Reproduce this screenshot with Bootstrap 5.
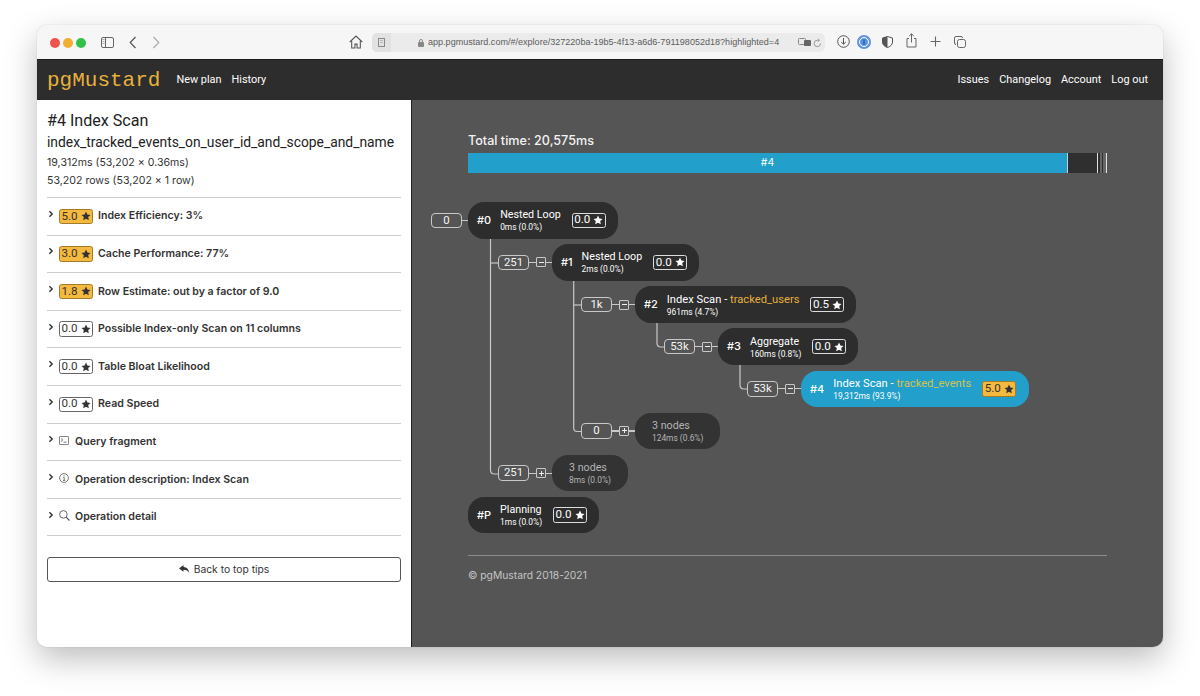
<!DOCTYPE html>
<html lang="en">
<head>
    <meta charset="UTF-8">
    <meta name="viewport" content="width=device-width, initial-scale=1.0">
    <title>pgMustard</title>
    <link href="https://cdn.jsdelivr.net/npm/bootstrap@5.3.3/dist/css/bootstrap.min.css" rel="stylesheet">
    <style>
        html, body { height: 100%; overflow: hidden; }
        body { background: #fff; font-family: Inter, "Liberation Sans", sans-serif; color: #2b2b2b; }

        /* browser window */
        .mac-window { margin: 25px 37px 0; width: 1126px; height: 622px; border-radius: 10px; overflow: hidden; box-shadow: 0 12px 32px rgba(0,0,0,.26), 0 0 1px rgba(0,0,0,.3); }
        .mac-toolbar { height: 35px; background: #f6f6f6; border-bottom: 1px solid #1c1c1c; color: #666; }
        .traffic { width: 10px; height: 10px; border-radius: 50%; margin-right: 3px; margin-top: 1px; }
        .traffic-red { background: #f0534e; margin-left: 12.5px; }
        .traffic-amber { background: #f2ae31; }
        .traffic-green { background: #33c148; }
        .url-box { position: absolute; left: 335px; top: 8px; width: 453px; height: 19px; background: #ebebeb; border-radius: 5px; font-family: "Liberation Sans", sans-serif; font-size: 9.05px; color: #5c5c5c; }
        .url-tab { position: absolute; left: 0; top: 0; width: 19px; height: 19px; background: #e2e2e2; border-radius: 5px 0 0 5px; }
        .url-text { position: absolute; left: 56px; top: 3px; white-space: nowrap; line-height: 13px; }
        .tb-icon { position: absolute; }
        .ic-sidebar { left: 64px; top: 12px; }
        .ic-back { left: 92px; top: 11px; }
        .ic-forward { left: 115px; top: 11px; }
        .ic-home { left: 312px; top: 10px; }
        .ic-reader { left: 5px; top: 5px; }
        .ic-lock { left: 46px; top: 6px; }
        .ic-translate { left: 426px; top: 5px; }
        .ic-reload { left: 441px; top: 5px; }
        .ic-download { left: 800px; top: 10px; }
        .ic-onepass { left: 820px; top: 10px; }
        .ic-shield { left: 845px; top: 11px; }
        .ic-share { left: 869px; top: 8px; }
        .ic-plus { left: 893px; top: 11px; }
        .ic-tabs { left: 917px; top: 11px; }

        /* app navbar */
        .app-nav { height: 40px; background: #2d2d2d; padding: 1px 10px 0; font-family: Roboto, sans-serif; }
        .app-brand { font-family: "Liberation Mono", monospace; font-size: 21px; color: #e8b03c; margin-right: 11px; padding: 0; line-height: 39px; }
        .app-link { color: #fff; font-size: 10.9px; padding: 0 5px; }
        .app-link:hover { color: #fff; }

        .main-row { height: 547px; }
        .side-panel { width: 375px; background: #fff; padding: 10px 10px 0; border-right: 1px solid #222; }
        .graph-panel { width: 751px; background: #555; padding: 0 56px; color: #fff; position: relative; }

        .plan-title { font-family: Roboto, sans-serif; font-size: 16.1px; line-height: 22px; font-weight: 400; margin: 0; color: #222; }
        .plan-index { font-family: Roboto, sans-serif; font-size: 13.85px; line-height: 20px; margin-bottom: 1.5px; color: #222; }
        .plan-meta { font-size: 10.6px; line-height: 18px; color: #333; }
        .tip-list { margin-top: 7.5px; border-top: 1px solid #ccc; }
        .tip-row { height: 37.6px; border-bottom: 1px solid #ccc; font-size: 10.6px; font-weight: 600; color: #333; display: flex; align-items: center; }
        .tip-chev { width: 8px; height: 8px; margin-right: 4px; flex: none; margin-top: -5px; }
        .tip-icon { width: 16px; flex: none; color: #555; margin-top: -3px; }
        .tip-icon svg { display: block; }
        .tip-row .score { margin-right: 5px; }

        .score { display: inline-flex; align-items: center; justify-content: center; gap: 3px; width: 34px; height: 15.5px; border: 1px solid #666; border-radius: 2.5px; font-family: Roboto, sans-serif; font-size: 11.6px; font-weight: 400; line-height: 1; flex: none; color: #333; }
        .score svg { width: 10px; height: 10px; }
        .score.hot { background: #f6b93f; border-color: #a27c26; color: #333; }
        .score.on-dark { border-color: #ddd; color: #fff; }

        .back-btn { width: 100%; height: 25px; margin-top: 21px; font-size: 10.3px; color: #333; padding: 0; border: 1px solid #555; border-radius: 3px; }

        /* timing bar */
        .total-time { font-size: 12.6px; font-weight: 500; line-height: 16px; padding-top: 33px; margin-bottom: 4px; color: #f2f2f2; }
        .time-bar { height: 20px; font-size: 10.5px; }
        .seg-main { background: #22a0cb; border-right: 1px solid #ccc; }
        .seg-dark { background: #2f2f2f; }
        .seg-line { background: #e0e0e0; }
        .seg-grey { background: #666; }

        /* plan tree */
        .tree { position: relative; margin: 29px 0 0 -38px; height: 353px; display: flex; flex-direction: column; gap: 5.65px; }
        .tree-lines { position: absolute; left: 0; top: 0; }
        .tree-row { display: flex; align-items: center; position: relative; }
        .lvl-p { margin-left: 38px; }
        .lvl-0 { margin-left: 1px; }
        .lvl-1 { margin-left: 68px; }
        .lvl-2 { margin-left: 151px; }
        .lvl-3 { margin-left: 234px; }
        .lvl-4 { margin-left: 317px; }
        .rows-pill { width: 31px; height: 15.5px; border: 1.3px solid #c8c8c8; border-radius: 4px; font-family: Roboto, sans-serif; font-size: 11.4px; line-height: 13px; text-align: center; color: #f4f4f4; flex: none; }
        .tick { width: 7px; height: 1.2px; background: #c8c8c8; flex: none; }
        .tick-s { width: 6px; }
        .tog { width: 10px; height: 10px; border: 1px solid #c8c8c8; flex: none; position: relative; border-radius: 1px; }
        .tog::before { content: ""; position: absolute; left: 1.5px; right: 1.5px; top: 3.5px; height: 1px; background: #eee; }
        .tog.plus::after { content: ""; position: absolute; top: 1.5px; bottom: 1.5px; left: 3.5px; width: 1px; background: #eee; }
        .pg-node { height: 36.5px; background: #2d2d2d; border-radius: 16px; display: flex; align-items: center; padding: 0 12px 0 9px; flex: none; }
        .pg-node.active { background: #22a0cb; padding-right: 13px; }
        .pg-node.fold { background: #333; padding: 0 17px; color: #b4b4b4; }
        .node-num { margin-right: 9px; font-size: 11px; font-weight: 500; flex: none; }
        .node-text { margin-right: 11px; padding-top: 1.5px; font-family: Roboto, sans-serif; }
        .fold .node-text { margin: 0; }
        .node-name { font-size: 10.7px; line-height: 13px; white-space: nowrap; }
        .node-name.scan-name { font-size: 11.2px; }
        .node-sub { font-size: 8.4px; line-height: 12.5px; white-space: nowrap; }
        .rel-name { color: #e8b03a; }
        .active .rel-name { color: #d5c24c; }

        .page-foot { margin: 0; border-top: 1px solid #8c8c8c; padding-top: 12px; font-size: 10.3px; line-height: 14px; color: #c4c4c4; }
    </style>
</head>
<body>
    <svg width="0" height="0" class="position-absolute">
        <symbol id="star" viewBox="0 0 16 16"><path fill="currentColor" d="M8 .9l2.2 4.7 5.1.6-3.8 3.5 1 5.1L8 12.3l-4.500 2.500 1-5.100L.7 6.200l5.100-.6z"/></symbol>
        <symbol id="chev" viewBox="0 0 8 8"><path fill="none" stroke="currentColor" stroke-width="1.4" d="M2.400 1.200 5.200 4 2.400 6.800"/></symbol>
    </svg>

    <div class="mac-window">
        <!-- Safari toolbar -->
        <div class="mac-toolbar position-relative d-flex align-items-center">
            <span class="traffic traffic-red"></span>
            <span class="traffic traffic-amber"></span>
            <span class="traffic traffic-green"></span>

            <svg class="tb-icon ic-sidebar" width="13" height="11" viewBox="0 0 13 11" fill="none" stroke="#666"><rect x=".5" y=".5" width="12" height="10" rx="1.500"/><path d="M4.500.5v10"/><path d="M1.500 2.500h2M1.500 4.500h2M1.500 6.500h2" stroke="#aaa"/></svg>
            <svg class="tb-icon ic-back" width="8" height="13" viewBox="0 0 8 13" fill="none" stroke="#555" stroke-width="1.200"><path d="M6.500 1 1.200 6.500 6.500 12"/></svg>
            <svg class="tb-icon ic-forward" width="8" height="13" viewBox="0 0 8 13" fill="none" stroke="#aaa" stroke-width="1.200"><path d="M1.500 1l5.300 5.500L1.500 12"/></svg>
            <svg class="tb-icon ic-home" width="14" height="14" viewBox="0 0 13 13" fill="none" stroke="#555"><path d="M.7 6.500 6.500 1l5.800 5.500"/><path d="M2.500 5.500V12h3V8.500h2V12h3V5.500"/></svg>

            <div class="url-box">
                <span class="url-tab"></span>
                <svg class="tb-icon ic-reader" width="9" height="9" viewBox="0 0 9 9" fill="none" stroke="#888"><rect x="1.500" y=".5" width="6" height="8"/><path d="M3 2.500h3M3 4.500h3" stroke="#bbb"/></svg>
                <svg class="tb-icon ic-lock" width="6" height="8" viewBox="0 0 6 8" fill="#888"><rect y="3" width="6" height="5" rx="1"/><path fill="none" stroke="#888" d="M1.500 3.500V2a1.500 1.500 0 0 1 3 0v1.500"/></svg>
                <span class="url-text">app.pgmustard.com/#/explore/327220ba-19b5-4f13-a6d6-791198052d18?highlighted=4</span>
                <svg class="tb-icon ic-translate" width="14" height="9" viewBox="0 0 14 9"><rect x=".5" y=".5" width="7" height="6" rx="1" fill="none" stroke="#888"/><rect x="6" y="2" width="7" height="6" rx="1" fill="#666"/></svg>
                <svg class="tb-icon ic-reload" width="9" height="10" viewBox="0 0 9 10" fill="none" stroke="#999"><path d="M7.500 5.500A3.200 3.200 0 1 1 4.500 2.300H6M5 .8l1.500 1.500L5 3.800"/></svg>
            </div>

            <svg class="tb-icon ic-download" width="13" height="13" viewBox="0 0 13 13" fill="none" stroke="#555"><circle cx="6.500" cy="6.500" r="5.800"/><path d="M6.500 3v6M4.200 7l2.300 2.200L8.800 7"/></svg>
            <svg class="tb-icon ic-onepass" width="14" height="14" viewBox="0 0 14 14"><circle cx="7" cy="7" r="7" fill="#5d93e0"/><circle cx="7" cy="7" r="4.500" fill="none" stroke="#fff"/><rect x="6.300" y="4.500" width="1.400" height="5" fill="#1f5fc0"/></svg>
            <svg class="tb-icon ic-shield" width="11" height="12" viewBox="0 0 11 12"><path d="M5.500.5 10.500 2v4c0 3-2.500 4.700-5 5.500C3 10.700.5 9 .5 6V2z" fill="none" stroke="#555"/><path d="M5.500.5.500 2v4c0 3 2.500 4.700 5 5.500z" fill="#555"/></svg>
            <svg class="tb-icon ic-share" width="11" height="15" viewBox="0 0 11 15" fill="none" stroke="#666"><path d="M3 5.500H1v8.500h9V5.500H8M5.500 9.500V1M3.200 3 5.500 .8 7.800 3"/></svg>
            <svg class="tb-icon ic-plus" width="11" height="11" viewBox="0 0 11 11" fill="none" stroke="#666" stroke-width="1.100"><path d="M5.500.5v10M.5 5.500h10"/></svg>
            <svg class="tb-icon ic-tabs" width="12" height="12" viewBox="0 0 12 12" fill="none" stroke="#666"><rect x="3.500" y="3.500" width="8" height="8" rx="2"/><path d="M2 8.500A1.500 1.500 0 0 1 .5 7V2A1.500 1.500 0 0 1 2 .5h5A1.500 1.500 0 0 1 8.500 2"/></svg>
        </div>

        <!-- App navbar -->
        <nav class="app-nav d-flex align-items-center">
            <a class="app-brand text-decoration-none" href="#">pgMustard</a>
            <a class="app-link text-decoration-none" href="#">New plan</a>
            <a class="app-link text-decoration-none" href="#">History</a>
            <div class="ms-auto d-flex">
                <a class="app-link text-decoration-none" href="#">Issues</a>
                <a class="app-link text-decoration-none" href="#">Changelog</a>
                <a class="app-link text-decoration-none" href="#">Account</a>
                <a class="app-link text-decoration-none" href="#">Log out</a>
            </div>
        </nav>

        <div class="main-row d-flex">
            <!-- Left panel -->
            <aside class="side-panel flex-shrink-0">
                <h1 class="plan-title">#4 Index Scan</h1>
                <div class="plan-index">index_tracked_events_on_user_id_and_scope_and_name</div>
                <div class="plan-meta">19,312ms (53,202 × 0.36ms)</div>
                <div class="plan-meta">53,202 rows (53,202 × 1 row)</div>

                <div class="tip-list">
                    <div class="tip-row"><svg class="tip-chev"><use href="#chev"/></svg><span class="score hot">5.0 <svg><use href="#star"/></svg></span>Index Efficiency: 3%</div>
                    <div class="tip-row"><svg class="tip-chev"><use href="#chev"/></svg><span class="score hot">3.0 <svg><use href="#star"/></svg></span>Cache Performance: 77%</div>
                    <div class="tip-row"><svg class="tip-chev"><use href="#chev"/></svg><span class="score hot">1.8 <svg><use href="#star"/></svg></span>Row Estimate: out by a factor of 9.0</div>
                    <div class="tip-row"><svg class="tip-chev"><use href="#chev"/></svg><span class="score">0.0 <svg><use href="#star"/></svg></span>Possible Index-only Scan on 11 columns</div>
                    <div class="tip-row"><svg class="tip-chev"><use href="#chev"/></svg><span class="score">0.0 <svg><use href="#star"/></svg></span>Table Bloat Likelihood</div>
                    <div class="tip-row"><svg class="tip-chev"><use href="#chev"/></svg><span class="score">0.0 <svg><use href="#star"/></svg></span>Read Speed</div>
                    <div class="tip-row"><svg class="tip-chev"><use href="#chev"/></svg><span class="tip-icon"><svg width="10" height="9" viewBox="0 0 10 9" fill="none" stroke="#555" stroke-width=".8"><rect x=".4" y=".4" width="9.200" height="8.200" rx=".8"/><path d="M2 2.500 3.800 4 2 5.500M4.500 6.200h3"/></svg></span>Query fragment</div>
                    <div class="tip-row"><svg class="tip-chev"><use href="#chev"/></svg><span class="tip-icon"><svg width="10" height="10" viewBox="0 0 10 10" fill="none" stroke="#555" stroke-width=".8"><circle cx="5" cy="5" r="4.400"/><path d="M4.200 4.400H5.200V7.400M4 7.400H6.200"/><path d="M5 2.400v1" stroke-width="1"/></svg></span>Operation description: Index Scan</div>
                    <div class="tip-row"><svg class="tip-chev"><use href="#chev"/></svg><span class="tip-icon"><svg width="11" height="11" viewBox="0 0 11 11" fill="none" stroke="#555" stroke-width=".9"><circle cx="4.400" cy="4.400" r="3.800"/><path d="M7.200 7.200l3.300 3.300" stroke-width="1.200"/></svg></span>Operation detail</div>
                </div>

                <button class="btn back-btn d-flex align-items-center justify-content-center gap-1" type="button">
                    <svg width="11" height="9" viewBox="0 0 11 9"><path fill="#333" d="M4.500 0 0 3.400l4.500 3.400V4.700c2.800 0 4.500.8 5.800 3.300C10 4.600 8 2.300 4.500 2z"/></svg>
                    Back to top tips
                </button>
            </aside>

            <!-- Plan graph -->
            <section class="graph-panel flex-grow-1">
                <div class="total-time">Total time: 20,575ms</div>
                <div class="time-bar d-flex">
                    <div class="seg-main d-flex align-items-center justify-content-center" style="width:600px">#4</div>
                    <div class="seg-dark" style="width:29px"></div>
                    <div class="seg-line" style="width:1px"></div>
                    <div class="seg-dark" style="width:2px"></div>
                    <div class="seg-grey" style="width:2px"></div>
                    <div class="seg-dark" style="width:1px"></div>
                    <div class="seg-grey" style="width:3px"></div>
                    <div class="seg-line" style="width:1px"></div>
                </div>

                <div class="tree">
                    <svg class="tree-lines" width="640" height="300" fill="none" stroke="#c8c8c8" stroke-width="1.200">
                        <path d="M60.500 30V268q0 4 4 4H68"/>
                        <path d="M60.500 61H68"/>
                        <path d="M143.700 75V226q0 3.500 3.500 3.500H151"/>
                        <path d="M143.700 103H151"/>
                        <path d="M227 117V141q0 4 4 4H234"/>
                        <path d="M310 160V183q0 4 4 4H317"/>
                    </svg>

                    <div class="tree-row lvl-0">
                        <span class="rows-pill">0</span><span class="tick tick-s"></span>
                        <div class="pg-node"><span class="node-num">#0</span><div class="node-text"><div class="node-name">Nested Loop</div><div class="node-sub">0ms (0.0%)</div></div><span class="score on-dark">0.0 <svg><use href="#star"/></svg></span></div>
                    </div>
                    <div class="tree-row lvl-1">
                        <span class="rows-pill">251</span><span class="tick"></span><span class="tog"></span><span class="tick tick-s"></span>
                        <div class="pg-node"><span class="node-num">#1</span><div class="node-text"><div class="node-name">Nested Loop</div><div class="node-sub">2ms (0.0%)</div></div><span class="score on-dark">0.0 <svg><use href="#star"/></svg></span></div>
                    </div>
                    <div class="tree-row lvl-2">
                        <span class="rows-pill">1k</span><span class="tick"></span><span class="tog"></span><span class="tick tick-s"></span>
                        <div class="pg-node"><span class="node-num">#2</span><div class="node-text"><div class="node-name scan-name">Index Scan - <span class="rel-name">tracked_users</span></div><div class="node-sub">961ms (4.7%)</div></div><span class="score on-dark">0.5 <svg><use href="#star"/></svg></span></div>
                    </div>
                    <div class="tree-row lvl-3">
                        <span class="rows-pill">53k</span><span class="tick"></span><span class="tog"></span><span class="tick tick-s"></span>
                        <div class="pg-node"><span class="node-num">#3</span><div class="node-text"><div class="node-name">Aggregate</div><div class="node-sub">160ms (0.8%)</div></div><span class="score on-dark">0.0 <svg><use href="#star"/></svg></span></div>
                    </div>
                    <div class="tree-row lvl-4">
                        <span class="rows-pill">53k</span><span class="tick"></span><span class="tog"></span><span class="tick tick-s"></span>
                        <div class="pg-node active"><span class="node-num">#4</span><div class="node-text"><div class="node-name scan-name">Index Scan - <span class="rel-name">tracked_events</span></div><div class="node-sub">19,312ms (93.9%)</div></div><span class="score hot">5.0 <svg><use href="#star"/></svg></span></div>
                    </div>
                    <div class="tree-row lvl-2">
                        <span class="rows-pill">0</span><span class="tick"></span><span class="tog plus"></span><span class="tick tick-s"></span>
                        <div class="pg-node fold"><div class="node-text"><div class="node-name">3 nodes</div><div class="node-sub">124ms (0.6%)</div></div></div>
                    </div>
                    <div class="tree-row lvl-1">
                        <span class="rows-pill">251</span><span class="tick"></span><span class="tog plus"></span><span class="tick tick-s"></span>
                        <div class="pg-node fold"><div class="node-text"><div class="node-name">3 nodes</div><div class="node-sub">8ms (0.0%)</div></div></div>
                    </div>
                    <div class="tree-row lvl-p">
                        <div class="pg-node"><span class="node-num">#P</span><div class="node-text"><div class="node-name">Planning</div><div class="node-sub">1ms (0.0%)</div></div><span class="score on-dark">0.0 <svg><use href="#star"/></svg></span></div>
                    </div>
                </div>

                <div class="page-foot">© pgMustard 2018-2021</div>
            </section>
        </div>
    </div>

    <script src="https://cdn.jsdelivr.net/npm/bootstrap@5.3.3/dist/js/bootstrap.bundle.min.js"></script>
</body>
</html>
